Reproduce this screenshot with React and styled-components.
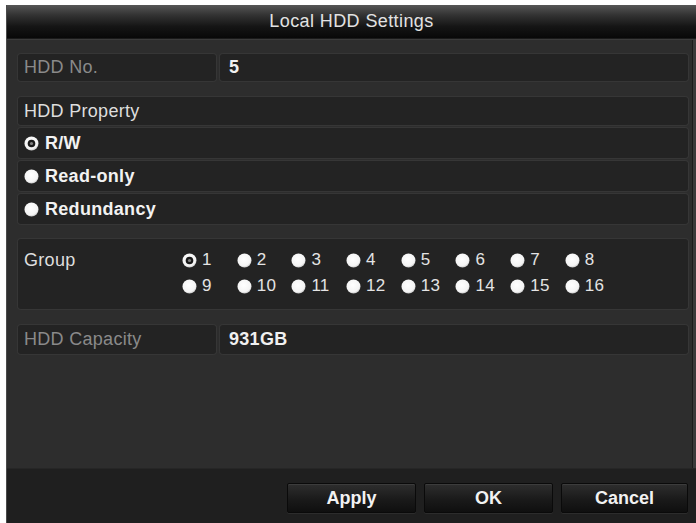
import React from "react";
import styled, { createGlobalStyle } from "styled-components";

const Global = createGlobalStyle`
  html, body {
    margin: 0;
    padding: 0;
    background: #ffffff;
    font-family: "Liberation Sans", Arial, sans-serif;
  }
`;

const Dialog = styled.div`
  margin: 5px 0 0 6px;
  width: 690px;
  height: 518px;
  background: #2d2d2d;
  border-left: 1px solid #4a4a4a;
  box-sizing: border-box;
  display: flex;
  flex-direction: column;
  box-shadow: inset -3px 0 0 #3a3a3a, inset -4px 0 0 #1c1c1c;
`;

const TitleBar = styled.div`
  height: 33px;
  flex: none;
  display: flex;
  align-items: center;
  justify-content: center;
  background: linear-gradient(#565656 0%, #333 30%, #151515 65%, #080808 100%);
  color: #e2e2e2;
  font-size: 18px;
  letter-spacing: 0.4px;
  border-bottom: 1px solid #1a1a1a;
`;

const Content = styled.div`
  flex: 1;
  padding: 14px 8px 0 11px;
  display: flex;
  flex-direction: column;
  border-top: 1px solid #3c3c3c;
`;

const FieldRow = styled.div`
  display: flex;
  gap: 4px;
  height: ${(p) => p.$h || 27}px;
  margin-top: ${(p) => p.$mt || 0}px;
`;

const Cell = styled.div`
  background: #232323;
  border-radius: 3px;
  box-shadow: 0 0 0 1px #363636;
  display: flex;
  align-items: center;
  font-size: 18px;
  letter-spacing: 0.3px;
`;

const LabelCell = styled(Cell)`
  width: 198px;
  padding-left: 6px;
  box-sizing: border-box;
  color: #8a8a8a;
`;

const ValueCell = styled(Cell)`
  flex: 1;
  padding-left: 9px;
  color: #f0f0f0;
  font-weight: bold;
`;

const PropertyBlock = styled.div`
  margin-top: 16px;
  display: flex;
  flex-direction: column;
  gap: 3px;
`;

const PropRow = styled(Cell)`
  height: ${(p) => p.$h || 30}px;
  padding-left: 6px;
  color: ${(p) => (p.$header ? "#dedede" : "#f2f2f2")};
  font-weight: ${(p) => (p.$header ? "normal" : "bold")};
  gap: 6px;
`;

const GroupBox = styled(Cell)`
  margin-top: 15px;
  height: 70px;
  align-items: flex-start;
  padding: 8px 0 0 6px;
  box-sizing: border-box;
  color: #dedede;
`;

const GroupLabel = styled.div`
  width: 158px;
  line-height: 26px;
`;

const RadioGrid = styled.div`
  display: grid;
  grid-template-columns: repeat(8, 54.7px);
  grid-auto-rows: 26px;
`;

const RadioItem = styled.div`
  display: flex;
  align-items: center;
  gap: 5px;
  font-size: 17px;
  color: #e4e4e4;
`;

const Spacer = styled.div`
  flex: 1;
`;

const Footer = styled.div`
  height: 55px;
  flex: none;
  background: #1f1f1f;
  border-top: 1px solid #262626;
  display: flex;
  justify-content: flex-end;
  align-items: flex-start;
  gap: 8px;
  padding: 14px 8px 0 0;
  box-sizing: border-box;
`;

const Button = styled.div`
  width: ${(p) => p.$w || 129}px;
  height: 30px;
  display: flex;
  align-items: center;
  justify-content: center;
  background: linear-gradient(#2e2e2e, #1a1a1a 55%, #0f0f0f);
  border: 1px solid #0a0a0a;
  border-radius: 2px;
  box-shadow: inset 0 1px 0 #3c3c3c, 0 1px 0 #2c2c2c;
  color: #f2f2f2;
  font-size: 18px;
  font-weight: bold;
  box-sizing: border-box;
`;

function Radio({ checked }) {
  return (
    <svg width="15" height="15" viewBox="0 0 15 15" style={{ flex: "none" }}>
      <defs>
        <radialGradient id="rg" cx="45%" cy="40%" r="60%">
          <stop offset="0%" stopColor="#ffffff" />
          <stop offset="80%" stopColor="#f4f4f4" />
          <stop offset="100%" stopColor="#c8c8c8" />
        </radialGradient>
      </defs>
      <circle cx="7.5" cy="7.5" r="7" fill="url(#rg)" />
      {checked && (
        <>
          <circle cx="7.5" cy="7.5" r="3.8" fill="#1a1a1a" />
          <circle cx="7.5" cy="7.5" r="1.6" fill="#808080" />
        </>
      )}
    </svg>
  );
}

const groups = Array.from({ length: 16 }, (_, i) => i + 1);

export default function App() {
  return (
    <>
      <Global />
      <Dialog>
        <TitleBar>Local HDD Settings</TitleBar>
        <Content>
          <FieldRow>
            <LabelCell>HDD No.</LabelCell>
            <ValueCell>5</ValueCell>
          </FieldRow>

          <PropertyBlock>
            <PropRow $header $h={28}>HDD Property</PropRow>
            <PropRow>
              <Radio checked />
              R/W
            </PropRow>
            <PropRow>
              <Radio />
              Read-only
            </PropRow>
            <PropRow>
              <Radio />
              Redundancy
            </PropRow>
          </PropertyBlock>

          <GroupBox>
            <GroupLabel>Group</GroupLabel>
            <RadioGrid>
              {groups.map((n) => (
                <RadioItem key={n}>
                  <Radio checked={n === 1} />
                  {n}
                </RadioItem>
              ))}
            </RadioGrid>
          </GroupBox>

          <FieldRow $mt={16} $h={29}>
            <LabelCell>HDD Capacity</LabelCell>
            <ValueCell>931GB</ValueCell>
          </FieldRow>

          <Spacer />
        </Content>
        <Footer>
          <Button>Apply</Button>
          <Button>OK</Button>
          <Button $w={127}>Cancel</Button>
        </Footer>
      </Dialog>
    </>
  );
}
